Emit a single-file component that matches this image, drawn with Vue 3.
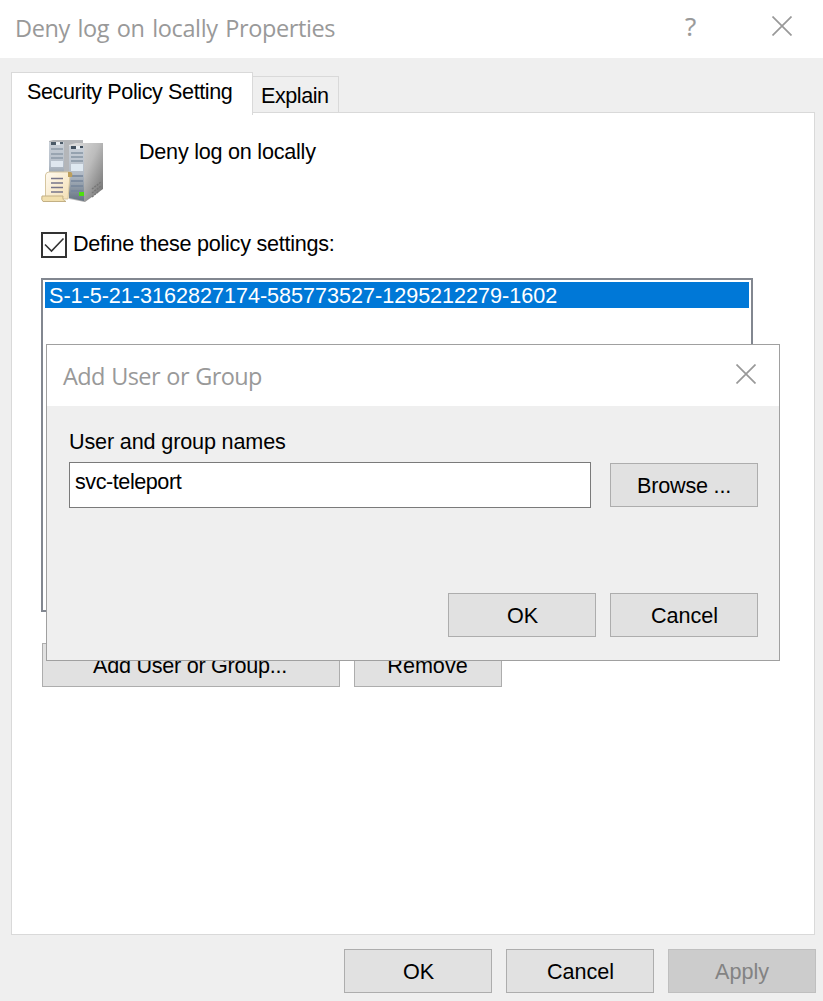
<script setup>
const policyName = 'Deny log on locally'
const members = ['S-1-5-21-3162827174-585773527-1295212279-1602']
</script>

<template>
  <main class="window">
    <header class="titlebar">
      <h1 class="title">{{ policyName }} Properties</h1>
      <span class="help">?</span>
      <svg class="close" width="20" height="20" viewBox="0 0 20 20"><path d="M.5 .5L19.5 19.5M19.5 .5L.5 19.5" /></svg>
    </header>

    <nav class="tabs">
      <div class="tab active"><span>Security Policy Setting</span></div>
      <div class="tab"><span>Explain</span></div>
    </nav>

    <section class="panel">
      <div class="policy">
        <svg class="server" width="64" height="64" viewBox="0 0 64 64">
          <defs>
            <linearGradient id="front" x1="0" y1="0" x2="0" y2="1">
              <stop offset="0" stop-color="#c9d0d8" /><stop offset=".5" stop-color="#b3bcc7" /><stop offset="1" stop-color="#667482" />
            </linearGradient>
            <linearGradient id="side" x1="0" y1="0" x2="1" y2=".8">
              <stop offset="0" stop-color="#e2e2e2" /><stop offset=".55" stop-color="#bcbcbc" /><stop offset="1" stop-color="#777" />
            </linearGradient>
            <linearGradient id="paper" x1="0" y1="0" x2="1" y2="1">
              <stop offset="0" stop-color="#fffaf0" /><stop offset="1" stop-color="#f3dfb4" />
            </linearGradient>
          </defs>
          <path d="M8 2L12 1H42V50H8Z" fill="#b4b6b9" />
          <path d="M8 3H23V50H8Z" fill="url(#front)" />
          <path d="M10 3H15V6H10ZM19 3H22V5H19Z" fill="#4b5a68" />
          <path d="M15 3H19V6H15Z" fill="#e8edf1" />
          <path d="M10 10H22M10 15H22M10 19H22" stroke="#8d9aa8" stroke-width="1.6" />
          <path d="M10 22H22V28H10Z" fill="#dfe7ef" />
          <path d="M28 6L35 4H62V50L44 63L28 60Z" fill="url(#side)" />
          <path d="M28 7H43V62L28 59Z" fill="url(#front)" />
          <path d="M30 7H35V10H30ZM39 7H42V9H39Z" fill="#41505e" />
          <path d="M35 7H39V10H35Z" fill="#e8edf1" />
          <path d="M30 14H42M30 18H42M30 22H42" stroke="#8795a4" stroke-width="1.6" />
          <path d="M30 37H42M30 42H42M30 47H42M30 52H42" stroke="#75859a" stroke-width="1.6" />
          <path d="M30 25H42V32H30Z" fill="#dfe9f1" />
          <path d="M51 50L60 43M51 54L60 47M51 58L58 52" stroke="#777" stroke-width="1.5" stroke-dasharray="2 1" />
          <path d="M38 53H43V57H38Z" fill="#4de00d" />
          <path d="M4.500 36Q5 33 8 33H29V36L27 60H4.500Z" fill="url(#paper)" stroke="#d6c6a0" />
          <path d="M27 33H30Q32 34 31 38H27Z" fill="#bd9f5c" />
          <path d="M10 39.500H22M10 44H22M10 48.500H22M10 53H22" stroke="#77758a" stroke-width="1.7" />
          <path d="M1 57H22Q21 61 25 62.500H2Q0 61 1 57Z" fill="#f1dfae" stroke="#c3b084" />
        </svg>
        <p class="name">{{ policyName }}</p>
      </div>

      <div class="define">
        <svg width="26" height="26" viewBox="0 0 26 26">
          <rect x="1" y="1" width="24" height="24" fill="#fff" stroke="#333" stroke-width="2" />
          <path d="M4 12.500L10.500 19L22.500 6.500" fill="none" stroke="#333" stroke-width="1.6" />
        </svg>
        <span class="define-text">Define these policy settings:</span>
      </div>

      <div class="list">
        <div v-for="member in members" :key="member" class="item">{{ member }}</div>
      </div>

      <div class="list-actions">
        <button class="wide"><span class="add-text">Add User or Group...</span></button>
        <button><span class="remove-text">Remove</span></button>
      </div>
    </section>

    <footer class="footer">
      <button><span>OK</span></button>
      <button><span>Cancel</span></button>
      <button class="disabled"><span>Apply</span></button>
    </footer>

    <section class="dialog">
      <header class="dialog-title">
        <h2 class="title">Add User or Group</h2>
        <svg class="close" width="20" height="20" viewBox="0 0 20 20"><path d="M.5 .5L19.5 19.5M19.5 .5L.5 19.5" /></svg>
      </header>
      <div class="dialog-body">
        <label class="field-label">User and group names</label>
        <div class="field-row">
          <div class="field"><span>svc-teleport</span></div>
          <button><span class="browse-text">Browse ...</span></button>
        </div>
        <div class="dialog-actions">
          <button><span>OK</span></button>
          <button><span>Cancel</span></button>
        </div>
      </div>
    </section>
  </main>
</template>

<style>
body { margin: 0; }
</style>

<style scoped>
* { box-sizing: border-box; margin: 0; }
.window {
  position: relative;
  width: 823px;
  height: 1001px;
  overflow: hidden;
  background: #efefef;
  color: #000;
  font: 21.6px/26px "Liberation Sans", Arial, sans-serif;
  white-space: nowrap;
}
.titlebar { display: flex; height: 58px; background: #fff; padding: 0 31px 0 15px; }
.title { font: 400 23.5px/32px "Open Sans", "Noto Sans", sans-serif; color: #999; }
.titlebar .title { padding-top: 12px; flex: 1; letter-spacing: -.4px; word-spacing: 2px; }
.help { width: 14px; margin-right: 73px; padding-top: 10px; font: 26px/32px "Open Sans", "Noto Sans", sans-serif; color: #999; -webkit-text-stroke: .2px #999; }
.close { stroke: #999; stroke-width: 1.7; fill: none; }
.titlebar .close { margin-top: 16px; }

.tabs { display: flex; align-items: flex-end; height: 57px; padding: 14px 0 0 11px; position: relative; z-index: 1; }
.tab { width: 86px; height: 37px; margin-bottom: 2px; padding: 6px 0 0 8px; border: 1px solid #d9d9d9; border-left: 0; letter-spacing: -.45px; }
.tab.active { width: 242px; height: 43px; margin: 0; padding: 6px 0 0 15px; border: 1px solid #d9d9d9; border-bottom: 0; background: #fff; letter-spacing: -.41px; }

.panel { width: 804px; height: 823px; margin: -3px 0 0 11px; padding: 26px 0 0 29px; border: 1px solid #d9d9d9; background: #fff; }
.policy { display: flex; height: 93px; }
.name { margin-left: 34px; letter-spacing: -.24px; }
.define { display: flex; height: 46px; gap: 6px; }
.define-text { margin-top: -1px; letter-spacing: -.25px; }
.list { width: 712px; height: 334px; padding: 2px; border: 2px solid #828790; }
.item { height: 26px; padding: 1px 0 0 4px; background: #0078d7; color: #fff; letter-spacing: -.02px; }
.list-actions { display: flex; gap: 14px; margin: 31px 0 0 1px; }

button {
  display: block;
  width: 148px;
  height: 44px;
  padding: 2px 0 0 1px;
  border: 1px solid #adadad;
  border-radius: 0;
  background: #e1e1e1;
  color: #000;
  font: inherit;
  text-align: center;
}
button.wide { width: 298px; padding: 2px 2px 0 0; }
button.disabled { padding-left: 0; background: #ccc; border-color: #bfbfbf; color: #838383; }
.add-text { letter-spacing: -.27px; }
.remove-text { margin-right: 2px; }
.browse-text { margin-right: 1px; letter-spacing: -.2px; }
.footer { display: flex; gap: 14px; margin: 14px 0 0 344px; }

.dialog { position: absolute; left: 46px; top: 344px; width: 734px; height: 317px; border: 1px solid #a0a0a0; background: #efefef; }
.dialog-title { display: flex; justify-content: space-between; height: 61px; padding: 0 23px 0 16px; background: #fff; }
.dialog-title .title { padding-top: 15px; letter-spacing: -.62px; word-spacing: 1px; }
.dialog-title .close { margin-top: 19px; }
.dialog-body { padding: 23px 21px 0 22px; }
.field-label { display: block; height: 33px; letter-spacing: -.15px; }
.field-row { display: flex; justify-content: space-between; align-items: center; }
.field { width: 522px; height: 46px; padding: 6px 5px; border: 1px solid #7a7a7a; background: #fff; letter-spacing: -.45px; }
.dialog-actions { display: flex; justify-content: flex-end; gap: 14px; margin-top: 85px; }
</style>
